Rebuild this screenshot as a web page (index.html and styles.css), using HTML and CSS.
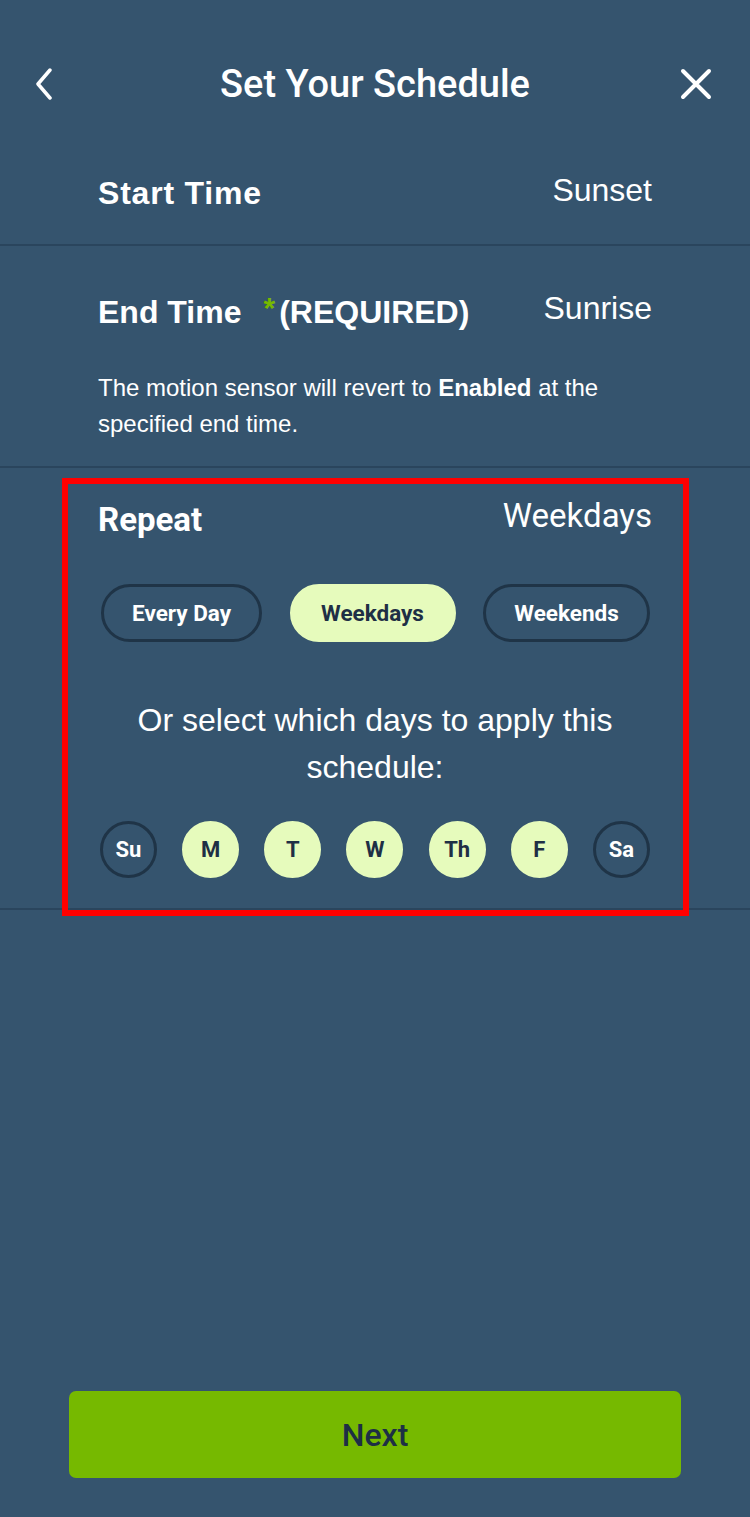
FILE: index.html
```html
<!DOCTYPE html>
<html lang="en">
<head>
<meta charset="utf-8">
<title>Set Your Schedule</title>
<link rel="stylesheet" href="styles.css">
</head>
<body>
<div class="screen">
  <header class="topbar">
    <button class="icon-btn back" aria-label="Back">
      <svg width="24" height="32" viewBox="0 0 24 32"><path d="M17 2 L5 16 L17 30" fill="none" stroke="#fff" stroke-width="3.5" stroke-linecap="round" stroke-linejoin="round"/></svg>
    </button>
    <h1 class="title">Set Your Schedule</h1>
    <button class="icon-btn close" aria-label="Close">
      <svg width="32" height="32" viewBox="0 0 32 32"><path d="M3 3 L29 29 M29 3 L3 29" fill="none" stroke="#fff" stroke-width="4" stroke-linecap="round"/></svg>
    </button>
  </header>

  <section class="row start-row">
    <span class="row-label wide">Start Time</span>
    <span class="row-value">Sunset</span>
  </section>

  <section class="row end-row">
    <div class="row-head">
      <span class="row-label">End Time<span class="req"><span class="star">*</span>(REQUIRED)</span></span>
      <span class="row-value flat">Sunrise</span>
    </div>
    <p class="note">The motion sensor will revert to <b>Enabled</b> at the specified end time.</p>
  </section>

  <section class="row repeat-row">
    <div class="row-head">
      <span class="repeat-label">Repeat</span>
      <span class="repeat-value">Weekdays</span>
    </div>
    <div class="pills">
      <button class="pill w1">Every Day</button>
      <button class="pill w2 on">Weekdays</button>
      <button class="pill w3">Weekends</button>
    </div>
    <p class="select-text">Or select which days to apply this schedule:</p>
    <div class="days">
      <button class="day">Su</button>
      <button class="day on">M</button>
      <button class="day on">T</button>
      <button class="day on">W</button>
      <button class="day on">Th</button>
      <button class="day on">F</button>
      <button class="day">Sa</button>
    </div>
  </section>

  <div class="spacer"></div>

  <button class="next">Next</button>

  <div class="highlight"></div>
</div>
</body>
</html>
```

FILE: styles.css
```css
* { box-sizing: border-box; }
html, body { margin: 0; padding: 0; }
body {
  background: #35546e;
  color: #ffffff;
  font-family: "Liberation Sans", Arial, sans-serif;
}
button { font: inherit; color: inherit; background: none; border: 0; padding: 0; cursor: pointer; }

.screen {
  position: relative;
  width: 750px;
  height: 1517px;
  display: flex;
  flex-direction: column;
  overflow: hidden;
}

.topbar {
  height: 48px;
  margin-top: 60px;
  display: grid;
  grid-template-columns: 1fr auto 1fr;
  align-items: center;
  padding: 0 29px;
}
.icon-btn { width: 32px; height: 32px; display: flex; align-items: center; justify-content: center; }
.back { justify-self: start; }
.close { justify-self: end; margin-right: 9px; }
.title {
  margin: 0;
  font-family: Roboto, sans-serif;
  font-weight: 500;
  font-size: 38px;
  line-height: 48px;
  color: #fff;
}

.row {
  padding: 0 98px;
  border-bottom: 2px solid #2a455d;
}
.start-row {
  display: flex;
  justify-content: space-between;
  align-items: flex-start;
  padding-top: 66px;
  padding-bottom: 32px;
}
.row-label {
  font-weight: 700;
  font-size: 32px;
  line-height: 38px;
}
.row-label.wide { letter-spacing: 0.8px; }
.row-value {
  font-size: 32px;
  line-height: 38px;
  margin-top: -3px;
}
.row-value.flat { margin-top: 0; }
.row-head {
  display: flex;
  justify-content: space-between;
  align-items: flex-start;
}
.end-row { padding-top: 43px; padding-bottom: 24px; }
.req { margin-left: 22px; }
.star { color: #76b900; font-size: 30px; vertical-align: 5px; margin-right: 4px; }
.note {
  margin: 39px 0 0;
  font-size: 24px;
  line-height: 36px;
}
.note b { font-weight: 700; }

.repeat-row { padding-top: 33px; padding-bottom: 30px; }
.repeat-label {
  font-family: Roboto, sans-serif;
  font-weight: 700;
  font-size: 33px;
  line-height: 38px;
}
.repeat-value {
  font-family: Roboto, sans-serif;
  font-weight: 400;
  font-size: 33px;
  line-height: 38px;
  margin-top: -4px;
}
.pills {
  display: flex;
  justify-content: space-between;
  margin: 45px 2px 0 3px;
}
.pill {
  height: 58px;
  border: 3px solid #1f3447;
  border-radius: 29px;
  font-family: Roboto, sans-serif;
  font-weight: 700;
  font-size: 22.5px;
  color: #fff;
}
.pill.w1 { width: 161px; }
.pill.w2 { width: 166px; }
.pill.w3 { width: 167px; }
.pill.on { background: #e6fbbc; border-color: #e6fbbc; color: #1e2f45; }

.select-text {
  margin: 55px 0 0;
  text-align: center;
  font-size: 32px;
  line-height: 47px;
  padding: 0 20px;
}
.days {
  display: flex;
  justify-content: space-between;
  margin: 30px 2px 0 2px;
}
.day {
  width: 57px;
  height: 57px;
  border-radius: 50%;
  border: 3px solid #1f3447;
  font-family: Roboto, sans-serif;
  font-weight: 700;
  font-size: 22px;
  color: #fff;
}
.day.on { background: #e6fbbc; border-color: #e6fbbc; color: #1e2f45; }

.spacer { flex: 1; }

.next {
  align-self: center;
  width: 612px;
  height: 87px;
  margin-bottom: 39px;
  background: #76b900;
  border-radius: 7px;
  font-family: Roboto, sans-serif;
  font-weight: 500;
  font-size: 32px;
  color: #1d2f45;
}

.highlight {
  position: absolute;
  left: 62px;
  top: 478px;
  width: 627px;
  height: 438px;
  border: 6px solid #ff0000;
  pointer-events: none;
}
```
